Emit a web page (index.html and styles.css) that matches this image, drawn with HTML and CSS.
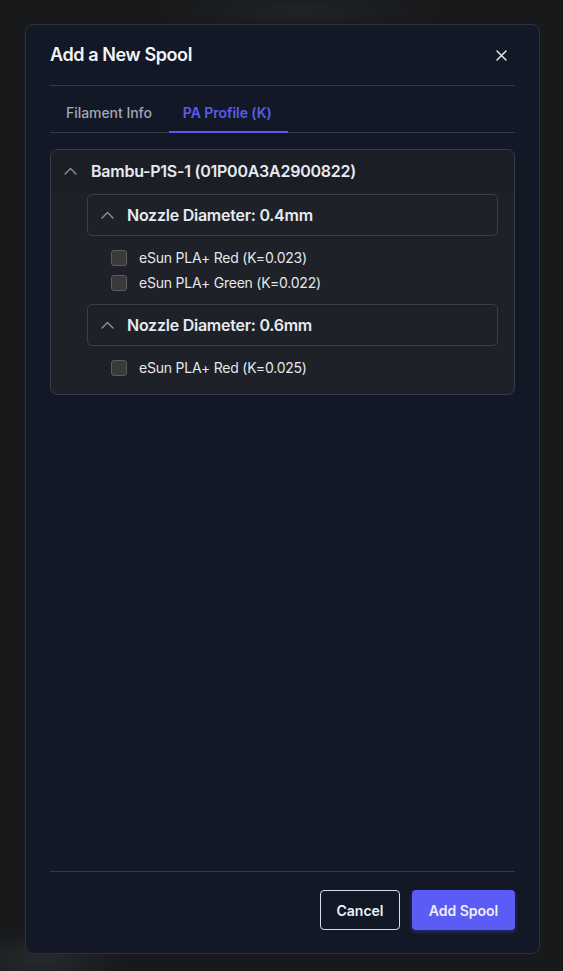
FILE: index.html
```html
<!DOCTYPE html>
<html lang="en">
<head>
<meta charset="utf-8">
<title>Add a New Spool</title>
<link rel="stylesheet" href="styles.css">
</head>
<body>
<div class="modal">
  <div class="modal-header">
    <h2 class="modal-title">Add a New Spool</h2>
    <button class="close-btn" aria-label="Close">
      <svg width="11" height="11" viewBox="0 0 11 11"><path d="M1 1 L10 10 M10 1 L1 10" stroke="#e5e7eb" stroke-width="1.5" stroke-linecap="round"/></svg>
    </button>
  </div>
  <div class="tabs">
    <div class="tab">Filament Info</div>
    <div class="tab active">PA Profile (K)</div>
  </div>
  <div class="modal-body">
    <div class="printer">
      <div class="printer-head">
        <svg class="chev" width="15" height="15" viewBox="0 0 15 15"><path d="M2 10 L7.5 4.5 L13 10" fill="none" stroke="#8b9099" stroke-width="1.4" stroke-linecap="round" stroke-linejoin="round"/></svg>
        <span>Bambu-P1S-1 (01P00A3A2900822)</span>
      </div>
      <div class="printer-body">
        <div class="nozzle">
          <svg class="chev" width="15" height="15" viewBox="0 0 15 15"><path d="M2 10 L7.5 4.5 L13 10" fill="none" stroke="#8b9099" stroke-width="1.4" stroke-linecap="round" stroke-linejoin="round"/></svg>
          <span>Nozzle Diameter: 0.4mm</span>
        </div>
        <div class="profiles">
          <label class="profile"><span class="box"></span>eSun PLA+ Red (K=0.023)</label>
          <label class="profile"><span class="box"></span>eSun PLA+ Green (K=0.022)</label>
        </div>
        <div class="nozzle">
          <svg class="chev" width="15" height="15" viewBox="0 0 15 15"><path d="M2 10 L7.5 4.5 L13 10" fill="none" stroke="#8b9099" stroke-width="1.4" stroke-linecap="round" stroke-linejoin="round"/></svg>
          <span>Nozzle Diameter: 0.6mm</span>
        </div>
        <div class="profiles">
          <label class="profile"><span class="box"></span>eSun PLA+ Red (K=0.025)</label>
        </div>
      </div>
    </div>
  </div>
  <div class="modal-footer">
    <button class="btn btn-cancel">Cancel</button>
    <button class="btn btn-primary">Add Spool</button>
  </div>
</div>
</body>
</html>
```

FILE: styles.css
```css
* { box-sizing: border-box; }
html, body { margin: 0; height: 100%; }
body {
  background:
    radial-gradient(ellipse 120px 40px at 40px 960px, rgba(70,74,78,0.35), transparent 70%),
    radial-gradient(ellipse 200px 30px at 300px 10px, rgba(60,63,66,0.25), transparent 70%),
    #17191b;
  font-family: Inter, "Noto Sans", "Liberation Sans", sans-serif;
  color: #e5e7eb;
  padding: 24px 23px 17px 25px;
}
.modal {
  width: 515px;
  height: 930px;
  background: #121825;
  border: 1px solid #2b3342;
  border-radius: 8px;
  display: flex;
  flex-direction: column;
  padding: 0 24px;
}
.modal-header {
  display: flex;
  align-items: center;
  justify-content: space-between;
  padding: 16px 0 16px;
  border-bottom: 1px solid #333a48;
}
.modal-title {
  margin: 0;
  font-size: 18px;
  line-height: 28px;
  font-weight: 600;
  letter-spacing: -0.4px;
  color: #f3f4f6;
}
.close-btn {
  background: none;
  border: 0;
  padding: 0;
  width: 11px;
  height: 11px;
  margin-right: 8px;
  display: flex;
}
.tabs {
  display: flex;
  gap: 2px;
  margin-top: 17px;
  border-bottom: 1px solid #333a48;
}
.tab {
  padding: 0 15px 8px 16px;
  font-size: 14px;
  line-height: 20px;
  font-weight: 500;
  letter-spacing: -0.05px;
  color: #a1a7b3;
  border-bottom: 2px solid transparent;
  margin-bottom: -1px;
}
.tab.active {
  font-weight: 600;
  padding: 0 16px 8px 14px;
  color: #5a5ceb;
  border-bottom-color: #5a5cf0;
}
.modal-body {
  flex: 1;
  padding-top: 16px;
}
.printer {
  border: 1px solid #363c47;
  border-radius: 7px;
  background: #1e2127;
  overflow: hidden;
}
.printer-head {
  display: flex;
  align-items: center;
  gap: 13px;
  height: 41px;
  padding-left: 12px;
  padding-top: 1px;
  background: #1b1f25;
  font-size: 16px;
  font-weight: 600;
  letter-spacing: -0.25px;
  color: #e6eaf2;
}
.chev { flex: none; }
.printer-body {
  padding: 3px 16px 5px 36px;
}
.nozzle {
  display: flex;
  align-items: center;
  gap: 12px;
  height: 42px;
  padding-left: 12px;
  border: 1px solid #3a404b;
  border-radius: 5px;
  font-size: 16px;
  font-weight: 600;
  letter-spacing: -0.25px;
  color: #e6eaf2;
}
.profiles {
  display: flex;
  flex-direction: column;
  gap: 5px;
  padding: 12px 0 11px 24px;
}
.profile {
  display: flex;
  align-items: center;
  gap: 12px;
  font-size: 14px;
  line-height: 20px;
  letter-spacing: -0.22px;
  color: #e5e7eb;
}
.box {
  width: 16px;
  height: 16px;
  border: 1px solid #5b5d61;
  border-radius: 3px;
  background: #3a3a3b;
}
.modal-footer {
  display: flex;
  justify-content: flex-end;
  gap: 12px;
  border-top: 1px solid #333a48;
  padding: 18px 0 23px;
}
.btn {
  height: 40px;
  border-radius: 4px;
  font-family: inherit;
  font-size: 14px;
  font-weight: 600;
  color: #eef0f6;
}
.btn-cancel {
  width: 80px;
  background: transparent;
  border: 1px solid #d9dce2;
}
.btn-primary {
  width: 103px;
  background: #5b5cf6;
  border: 0;
  box-shadow: 0 2px 4px rgba(79,70,229,0.45);
}
```
